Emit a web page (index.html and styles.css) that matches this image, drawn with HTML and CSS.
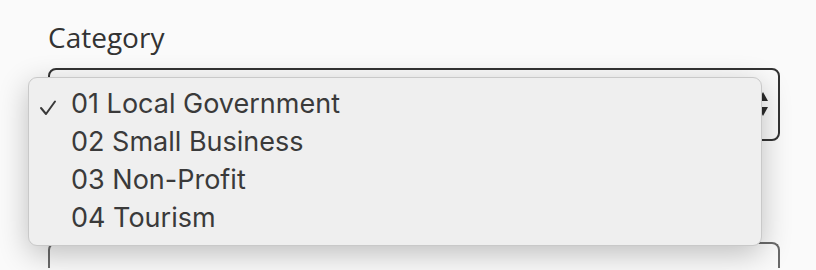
FILE: index.html
```html
<!DOCTYPE html>
<html>
<head>
<meta charset="utf-8">
<link rel="stylesheet" href="styles.css">
</head>
<body>
<div class="form">
  <label class="label">Category</label>
  <div class="select">
    <svg class="arrows" width="10" height="26" viewBox="0 0 10 26"><path d="M5 0 L10 9 L0 9 Z M0 15 L10 15 L5 24 Z" fill="#2b2b2b"/></svg>
  </div>
  <div class="input"></div>
  <div class="popup">
    <div class="item"><svg class="check" width="18" height="16" viewBox="0 0 18 16"><path d="M2 8 L7 14 L16 1.5" fill="none" stroke="#3a3a3a" stroke-width="2" stroke-linecap="round" stroke-linejoin="round"/></svg>01 Local Government</div>
    <div class="item">02 Small Business</div>
    <div class="item">03 Non-Profit</div>
    <div class="item">04 Tourism</div>
  </div>
</div>
</body>
</html>
```

FILE: styles.css
```css
html, body {
  margin: 0;
  padding: 0;
  background: #fafafa;
  height: 270px;
  overflow: hidden;
}
.form {
  position: relative;
  padding: 19px 36px 0 48px;
  display: flex;
  flex-direction: column;
}
.label {
  font-family: "Open Sans", sans-serif;
  font-size: 28px;
  line-height: 36px;
  color: #333;
}
.select {
  margin-top: 13px;
  height: 69px;
  border: 2px solid #333;
  border-radius: 8px;
  display: flex;
  align-items: center;
  justify-content: flex-end;
  padding-right: 10px;
}
.arrows {
  display: block;
}
.input {
  margin-top: 101px;
  height: 24px;
  border: 2px solid #6a6a6a;
  border-bottom: 0;
  border-radius: 8px 8px 0 0;
}
.popup {
  position: absolute;
  left: 28px;
  top: 77px;
  width: 732px;
  height: 160px;
  background: #efefef;
  border: 1px solid #c9c9c9;
  border-radius: 9px;
  box-shadow: 0 8px 30px rgba(0, 0, 0, 0.24);
  padding-top: 7px;
  box-sizing: content-box;
  font-family: Inter, "Noto Sans", sans-serif;
  font-size: 27px;
  color: #3a3a3a;
}
.item {
  position: relative;
  height: 38px;
  line-height: 38px;
  padding-left: 42px;
}
.check {
  position: absolute;
  left: 10px;
  top: 15px;
}
```
